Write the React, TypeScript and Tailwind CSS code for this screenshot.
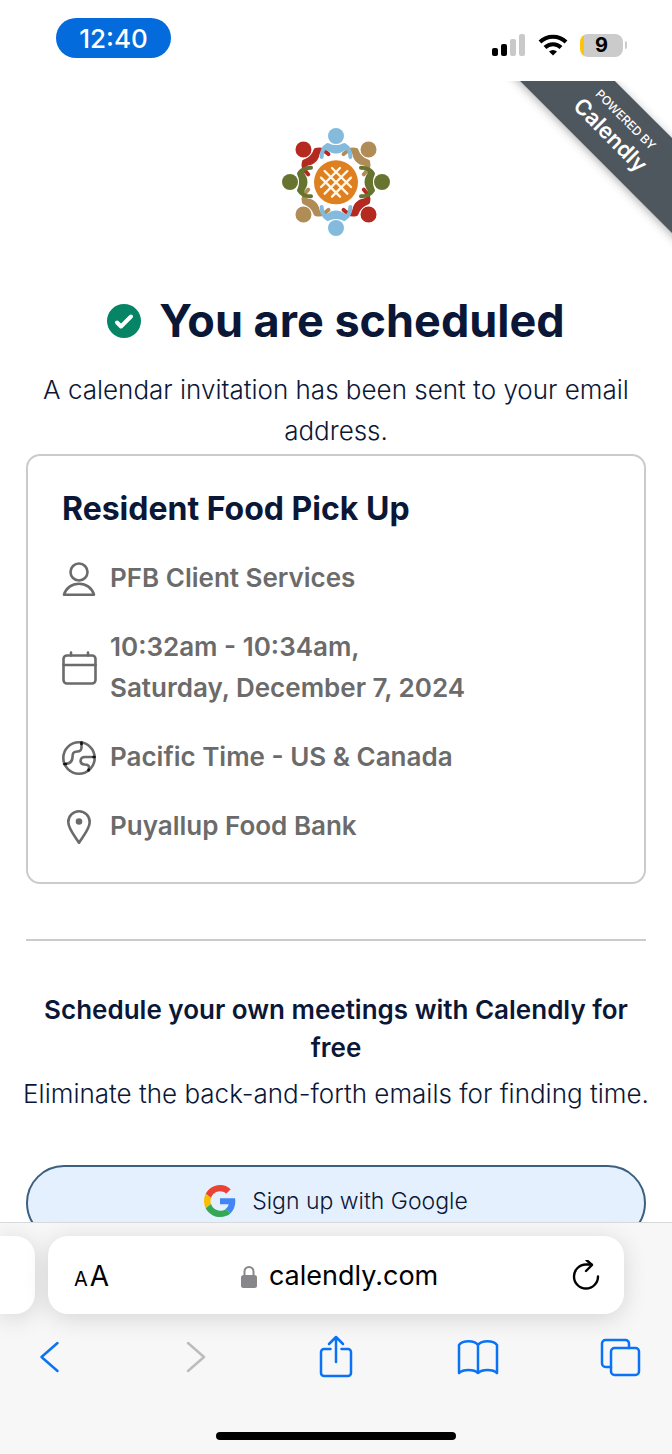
import type { ReactNode } from "react";

const GROUP = [
  { angle: 45, color: "#b08d57" },
  { angle: 135, color: "#b52a20" },
  { angle: 225, color: "#b08d57" },
  { angle: 315, color: "#b52a20" },
  { angle: 90, color: "#66742f" },
  { angle: 270, color: "#66742f" },
  { angle: 0, color: "#84bbdd" },
  { angle: 180, color: "#84bbdd" },
];

/** Food bank logo: eight people around an orange plate. */
function FoodBankLogo() {
  return (
    <svg className="size-[108px]" viewBox="38 38 324 324" role="img" aria-label="Puyallup Food Bank">
      {GROUP.map(({ angle, color }) => (
        <g key={angle} transform={`rotate(${angle} 200 200)`}>
          <path
            d="M157 125c0-16 5-29 18-36 16 8 34 8 50 0 13 7 18 20 18 36"
            fill="none"
            stroke={color}
            strokeWidth="12"
            strokeLinecap="round"
            strokeLinejoin="round"
          />
          <path d="M172 87c18 9 38 9 56 0l8 18c-8-2-13 2-18 5-11 6-25 6-36 0-5-3-10-7-18-5z" fill={color} />
          <circle cx="200" cy="62" r="26" fill="#fff" />
          <circle cx="200" cy="62" r="24" fill={color} />
        </g>
      ))}
      <circle cx="200" cy="201" r="66" fill="#df8020" />
      <path
        d="M155 187l57 57M166 167l68 68M188 158l57 57M245 187l-57 57M234 167l-68 68M212 158l-57 57"
        stroke="#fff8e8"
        strokeWidth="7"
        strokeLinecap="round"
      />
    </svg>
  );
}

function StatusBar() {
  return (
    <header className="flex h-[81px] shrink-0 items-start justify-between pl-[56px] pr-[45px] pt-[18px]">
      <div className="flex h-10 w-[115px] items-center justify-center rounded-full bg-[#046bdc] text-[26px] font-medium text-white">
        12:40
      </div>
      <div className="flex h-[54px] items-center gap-3">
        <svg className="h-[22px] w-[34px]" viewBox="0 0 34 22" aria-label="Signal">
          <rect x="0" y="14" width="6" height="8" rx="2" />
          <rect x="9" y="10" width="6" height="12" rx="2" />
          <rect x="18" y="5" width="6" height="17" rx="2" fill="#c9c9c9" />
          <rect x="27" y="0" width="6" height="22" rx="2" fill="#c9c9c9" />
        </svg>
        <svg className="h-[22px] w-[30px]" viewBox="0 0 30 22" fill="none" stroke="#000" strokeWidth="4" aria-label="Wi-Fi">
          <path d="M2 8a18.500 18.500 0 0 1 26 0M7 13.500a11.500 11.500 0 0 1 16 0" />
          <path d="M15 21.500l-4-4a6 6 0 0 1 8 0z" fill="#000" stroke="none" />
        </svg>
        <div className="flex items-center gap-0.5">
          <div className="flex h-[23px] w-[43px] items-center justify-center overflow-hidden rounded-[8px] bg-[linear-gradient(to_right,#fcc50b_4px,#cbcbcb_4px)] text-[20px] font-bold text-black">
            9
          </div>
          <span className="h-2 w-0.5 rounded-r-full bg-[#cbcbcb]" />
        </div>
      </div>
    </header>
  );
}

function Icon({ children }: { children: ReactNode }) {
  return (
    <svg
      className="size-9 shrink-0"
      viewBox="0 0 36 36"
      fill="none"
      stroke="#6b6b6b"
      strokeWidth="2.600"
      strokeLinecap="round"
      strokeLinejoin="round"
      aria-hidden="true"
    >
      {children}
    </svg>
  );
}

function Detail({ icon, children }: { icon: ReactNode; children: ReactNode }) {
  return (
    <li className="flex items-center gap-3">
      <Icon>{icon}</Icon>
      <span>{children}</span>
    </li>
  );
}

function EventCard() {
  return (
    <section className="mt-[3px] rounded-[14px] border-2 border-[#cbcbcb] px-[34px] pb-9 pt-8">
      <h2 className="text-[32px] font-bold leading-[41px]">Resident Food Pick Up</h2>
      <ul className="mt-7 flex flex-col gap-7 text-[26px] font-semibold leading-[41px] text-[#6b6b6b]">
        <Detail
          icon={
            <>
              <circle cx="17" cy="12" r="8.500" />
              <path d="M2 34.700c2-7 8-11 15-11s13 4 15 11z" />
            </>
          }
        >
          PFB Client Services
        </Detail>
        <Detail
          icon={
            <>
              <rect x="1.500" y="6.500" width="32" height="28" rx="3.500" />
              <path d="M1.500 16h32M9 3.500v3M26 3.500v3" />
            </>
          }
        >
          10:32am - 10:34am,
          <br />
          Saturday, December 7, 2024
        </Detail>
        <Detail
          icon={
            <>
              <circle cx="17" cy="19" r="15.700" />
              <path d="M19.500 3.500v5c0 2-1.500 4-4 4-4.500 0-5 2-5 5.500 0 5-3 7-8.500 7M32.500 18H23c-5.500 0-6 7-.5 7.500 3.500 0 5 1.500 4.500 4l-.5 2" />
              <path d="M19.500 3.500v1.500M31.500 18h1M2.500 25h1.500M26.700 30.500l-.2.800" stroke="#111" />
            </>
          }
        >
          Pacific Time - US &amp; Canada
        </Detail>
        <Detail
          icon={
            <>
              <path d="M17 34.700c-4-6.500-10.700-13.700-10.700-20.700a10.700 10.700 0 0 1 21.400 0c0 7-6.700 14.200-10.700 20.700z" />
              <circle cx="17" cy="13.500" r="2" fill="#6b6b6b" />
            </>
          }
        >
          Puyallup Food Bank
        </Detail>
      </ul>
    </section>
  );
}

function GoogleLogo() {
  return (
    <svg className="size-8" viewBox="0 0 48 48" aria-hidden="true">
      <path fill="#ea4335" d="M24 9.500c3.540 0 6.710 1.220 9.210 3.600l6.850-6.850C35.900 2.380 30.470 0 24 0 14.620 0 6.510 5.380 2.560 13.220l7.980 6.190C12.430 13.720 17.740 9.500 24 9.500z" />
      <path fill="#4285f4" d="M46.980 24.550c0-1.570-.15-3.090-.38-4.550H24v9.020h12.940c-.58 2.960-2.260 5.480-4.780 7.180l7.730 6c4.510-4.180 7.090-10.360 7.090-17.650z" />
      <path fill="#fbbc05" d="M10.530 28.590c-.48-1.450-.76-2.990-.76-4.590s.27-3.140.76-4.590l-7.980-6.190C.92 16.460 0 20.120 0 24s.92 7.540 2.560 10.780l7.970-6.190z" />
      <path fill="#34a853" d="M24 48c6.480 0 11.930-2.130 15.890-5.810l-7.730-6c-2.150 1.450-4.920 2.300-8.160 2.300-6.260 0-11.570-4.220-13.470-9.910l-7.980 6.190C6.510 42.620 14.620 48 24 48z" />
    </svg>
  );
}

function ToolButton({ label, disabled, children }: { label: string; disabled?: boolean; children: ReactNode }) {
  return (
    <button type="button" aria-label={label} disabled={disabled} className="text-[#0a73f5] disabled:text-[#bcbcbc]">
      <svg
        className="size-11"
        viewBox="0 0 44 44"
        fill="none"
        stroke="currentColor"
        strokeWidth="2.500"
        strokeLinecap="round"
        strokeLinejoin="round"
      >
        {children}
      </svg>
    </button>
  );
}

function BrowserBar() {
  return (
    <footer className="relative shrink-0 overflow-hidden border-t border-[#d7d9db] bg-[#f7f7f7] pb-[14px] pt-[13px] text-black">
      <div className="flex gap-[13px] pr-12">
        <div className="h-[78px] w-[35px] rounded-r-[20px] bg-white shadow-[0_4px_24px_rgba(0,0,0,0.14)]" />
        <div className="flex h-[78px] flex-1 items-center justify-between rounded-[20px] bg-white pl-[26px] pr-[22px] pt-0.5 shadow-[0_4px_24px_rgba(0,0,0,0.14)]">
          <button type="button" aria-label="Page settings" className="flex items-baseline gap-0.5">
            <span className="text-[20px]">A</span>
            <span className="text-[28px]">A</span>
          </button>
          <button type="button" className="flex items-center gap-3 text-[27px]">
            <svg className="h-[23px] w-4" viewBox="0 0 16 23" aria-hidden="true">
              <path d="M3.500 11V6.500a4.500 4.500 0 0 1 9 0V11" fill="none" stroke="#87878b" strokeWidth="2" />
              <rect y="10" width="16" height="13" rx="2.500" fill="#87878b" />
            </svg>
            calendly.com
          </button>
          <button type="button" aria-label="Reload">
            <svg
              className="size-8"
              viewBox="0 0 32 32"
              fill="none"
              stroke="#000"
              strokeWidth="2.400"
              strokeLinecap="round"
              strokeLinejoin="round"
            >
              <path d="M28 16.500a12 12 0 1 1-12-12h5.500" />
              <path d="M16.500 0l5.500 5-6 6" />
            </svg>
          </button>
        </div>
      </div>
      <nav className="mt-[21px] flex items-center justify-between pl-7 pr-[30px]">
        <ToolButton label="Back">
          <path d="M29.500 8l-16 14 16 14" />
        </ToolButton>
        <ToolButton label="Forward" disabled>
          <path d="M17 8l16 14-16 14" />
        </ToolButton>
        <ToolButton label="Share">
          <path d="M17.500 14H11a3 3 0 0 0-3 3v21a3 3 0 0 0 3 3h24a3 3 0 0 0 3-3V17a3 3 0 0 0-3-3h-6.500M23 27V2M16 9l7-7 7 7" />
        </ToolButton>
        <ToolButton label="Bookmarks">
          <path d="M22 10c-4-5-15-5-19 0v28c4-4 15-4 19 0 4-4 15-4 19 0V10c-4-5-15-5-19 0zM22 10v28" />
        </ToolButton>
        <ToolButton label="Tabs">
          <rect x="13" y="13" width="28" height="27" rx="3.500" />
          <path d="M13 32H7.500A3.500 3.500 0 0 1 4 28.500v-20A3.500 3.500 0 0 1 7.500 5h20A3.500 3.500 0 0 1 31 8.500V13" />
        </ToolButton>
      </nav>
      <div className="mx-auto mt-[53px] h-2 w-[240px] rounded-full bg-black" />
    </footer>
  );
}

export default function App() {
  return (
    <div className="flex h-screen flex-col overflow-hidden bg-white font-['Inter',sans-serif] text-[#0b1736]">
      <StatusBar />
      <main className="relative min-h-0 flex-1 overflow-hidden px-[26px] pt-[47px]">
        <a
          href="#calendly"
          className="absolute -right-[74px] top-[15px] flex h-[67px] w-[260px] rotate-45 flex-col items-center justify-center bg-[#4f575e] text-white shadow-[0_2px_10px_rgba(0,0,0,0.3)]"
        >
          <span className="text-[12px] font-medium leading-[14px]">POWERED BY</span>
          <span className="text-[22px] font-semibold leading-[28px]">Calendly</span>
        </a>

        <div className="flex justify-center">
          <FoodBankLogo />
        </div>

        <h1 className="mt-[57px] flex items-center justify-center gap-[18px] text-[45px] font-bold leading-[56px]">
          <svg className="size-[34px]" viewBox="0 0 34 34" aria-hidden="true">
            <circle cx="17" cy="17" r="17" fill="#068466" />
            <path
              d="M10 18.500l4 4 10-10"
              fill="none"
              stroke="#fff"
              strokeWidth="4"
              strokeLinecap="round"
              strokeLinejoin="round"
            />
          </svg>
          You are scheduled
        </h1>
        <p className="mt-5 text-center text-[26px] font-light leading-[41px]">
          A calendar invitation has been sent to your email address.
        </p>

        <EventCard />

        <hr className="mt-[55px] border-t-2 border-[#cbcbcb]" />

        <section className="mt-[50px] text-center text-[26px]">
          <h3 className="font-semibold leading-[38px]">Schedule your own meetings with Calendly for free</h3>
          <p className="-mx-1 mt-[7px] font-light leading-[40px]">
            Eliminate the back-and-forth emails for finding time.
          </p>
          <button
            type="button"
            className="mt-[51px] flex h-[76px] w-full items-center justify-center gap-4 rounded-full border-2 border-[#3b6080] bg-[#e5f0ff] pb-1 text-[23px] font-light"
          >
            <GoogleLogo />
            Sign up with Google
          </button>
        </section>
      </main>
      <BrowserBar />
    </div>
  );
}
